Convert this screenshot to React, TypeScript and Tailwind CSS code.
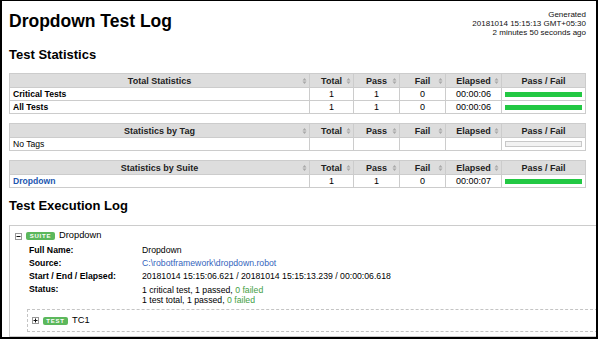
import React from 'react'

const font = "font-['Liberation_Sans',Arial,Helvetica,sans-serif]"

interface StatRow {
  name: string
  kind: 'bold' | 'plain' | 'link'
  total: string
  pass: string
  fail: string
  elapsed: string
  bar: 'full' | 'empty'
}

const totalRows: StatRow[] = [
  { name: 'Critical Tests', kind: 'bold', total: '1', pass: '1', fail: '0', elapsed: '00:00:06', bar: 'full' },
  { name: 'All Tests', kind: 'bold', total: '1', pass: '1', fail: '0', elapsed: '00:00:06', bar: 'full' }
]

const tagRows: StatRow[] = [
  { name: 'No Tags', kind: 'plain', total: '', pass: '', fail: '', elapsed: '', bar: 'empty' }
]

const suiteRows: StatRow[] = [
  { name: 'Dropdown', kind: 'link', total: '1', pass: '1', fail: '0', elapsed: '00:00:07', bar: 'full' }
]

function SortIcon() {
  return (
    <svg width="5" height="7" viewBox="0 0 5 7" className="absolute right-[2px] top-1/2 -translate-y-1/2">
      <path d="M0.5 3L2.5 0.5L4.5 3Z M0.5 4L2.5 6.5L4.5 4Z" fill="#a8a8a8" />
    </svg>
  )
}

function HeadCell({ label, sort = true }: { label: string; sort?: boolean }) {
  return (
    <th className="relative h-[14px] border border-[#ccc] bg-[#ddd] p-0 text-center align-middle text-[9px] font-bold leading-[12px] text-[#222]">
      {label}
      {sort && <SortIcon />}
    </th>
  )
}

function StatTable({ title, rows }: { title: string; rows: StatRow[] }) {
  return (
    <table className="w-[576px] table-fixed border-collapse border border-[#ccc]">
      <colgroup>
        <col className="w-[300px]" />
        <col className="w-[44px]" />
        <col className="w-[46px]" />
        <col className="w-[46px]" />
        <col className="w-[56px]" />
        <col className="w-[84px]" />
      </colgroup>
      <thead>
        <tr>
          <HeadCell label={title} />
          <HeadCell label="Total" />
          <HeadCell label="Pass" />
          <HeadCell label="Fail" />
          <HeadCell label="Elapsed" />
          <HeadCell label="Pass / Fail" sort={false} />
        </tr>
      </thead>
      <tbody>
        {rows.map(r => (
          <tr key={r.name} className="h-[13px]">
            <td className="border border-[#ccc] px-[3px] py-0 text-[8.6px] leading-[11px]">
              {r.kind === 'link' ? (
                <span className="font-bold text-[#2256b0]">{r.name}</span>
              ) : (
                <span className={r.kind === 'bold' ? 'font-bold text-black' : 'text-black'}>{r.name}</span>
              )}
            </td>
            <td className="border border-[#ccc] p-0 text-center text-[9px] leading-[11px] text-black">{r.total}</td>
            <td className="border border-[#ccc] p-0 text-center text-[9px] leading-[11px] text-black">{r.pass}</td>
            <td className="border border-[#ccc] p-0 text-center text-[9px] leading-[11px] text-black">{r.fail}</td>
            <td className="border border-[#ccc] p-0 text-center text-[9px] leading-[11px] text-black">{r.elapsed}</td>
            <td className="border border-[#ccc] px-[3px] py-0 align-middle">
              {r.bar === 'full' ? (
                <div className="h-[5px] bg-[#22c843]" />
              ) : (
                <div className="h-[6px] border border-[#c8c8c8] bg-[#f2f2f2]" />
              )}
            </td>
          </tr>
        ))}
      </tbody>
    </table>
  )
}

function Toggle({ open }: { open: boolean }) {
  return (
    <svg width="7" height="7" viewBox="0 0 7 7" className="shrink-0">
      <rect x="0.5" y="0.5" width="6" height="6" fill="#fff" stroke="#999" />
      <line x1="1.5" y1="3.5" x2="5.5" y2="3.5" stroke="#111" />
      {!open && <line x1="3.5" y1="1.5" x2="3.5" y2="5.5" stroke="#111" />}
    </svg>
  )
}

function Badge({ text, width }: { text: string; width: string }) {
  return (
    <span
      className={`${width} flex h-[8px] items-center justify-center rounded-[2px] bg-[#5cb85c] text-[6px] font-bold leading-none tracking-[0.8px] text-white`}
    >
      {text}
    </span>
  )
}

export default function App() {
  return (
    <div className={`h-[340px] w-[600px] bg-white ${font}`}>
      <div className="h-[339px] w-[598px] overflow-hidden border-t border-r-2 border-b-2 border-l-2 border-black text-black">
        <div className="flex h-[30px] items-start justify-between pl-[7px] pr-[10px]">
          <h1 className="mt-[10px] text-[17.5px] font-bold leading-[20px]">Dropdown Test Log</h1>
          <div className="mt-[9px] text-right text-[8px] leading-[9px] text-[#111]">
            <div>Generated</div>
            <div>20181014 15:15:13 GMT+05:30</div>
            <div>2 minutes 50 seconds ago</div>
          </div>
        </div>

        <div className="pl-[7px]">
          <h2 className="mt-[16px] text-[13px] font-bold leading-[15px]">Test Statistics</h2>
          <div className="mt-[11px] flex flex-col gap-[9px]">
            <StatTable title="Total Statistics" rows={totalRows} />
            <StatTable title="Statistics by Tag" rows={tagRows} />
            <StatTable title="Statistics by Suite" rows={suiteRows} />
          </div>

          <h2 className="mt-[10px] text-[13px] font-bold leading-[15px]">Test Execution Log</h2>

          <div className="mt-[12px] w-[600px] border border-[#ccc] pb-[4px] pl-[5px] pt-[2px]">
            <div className="flex h-[16px] items-center gap-[4px]">
              <Toggle open />
              <Badge text="SUITE" width="w-[29px]" />
              <span className="text-[9.3px] leading-none">Dropdown</span>
            </div>

            <div className="ml-[14px] grid grid-cols-[113px_1fr] text-[8.7px] leading-[13px]">
              <div className="font-bold">Full Name:</div>
              <div>Dropdown</div>
              <div className="font-bold">Source:</div>
              <div className="text-[#3565bd]">C:\robotframework\dropdown.robot</div>
              <div className="font-bold">Start / End / Elapsed:</div>
              <div>20181014 15:15:06.621 / 20181014 15:15:13.239 / 00:00:06.618</div>
              <div className="font-bold">Status:</div>
              <div className="pt-[2px] leading-[10px]">
                <div>
                  1 critical test, 1 passed, <span className="text-[#45a045]">0 failed</span>
                </div>
                <div>
                  1 test total, 1 passed, <span className="text-[#45a045]">0 failed</span>
                </div>
              </div>
            </div>

            <div className="ml-[12px] mt-[4px] flex h-[23px] items-center gap-[4px] border border-dashed border-[#c4c4c4] pl-[4px]">
              <Toggle open={false} />
              <Badge text="TEST" width="w-[25px]" />
              <span className="text-[9.3px] leading-none">TC1</span>
            </div>
          </div>
        </div>
      </div>
    </div>
  )
}
